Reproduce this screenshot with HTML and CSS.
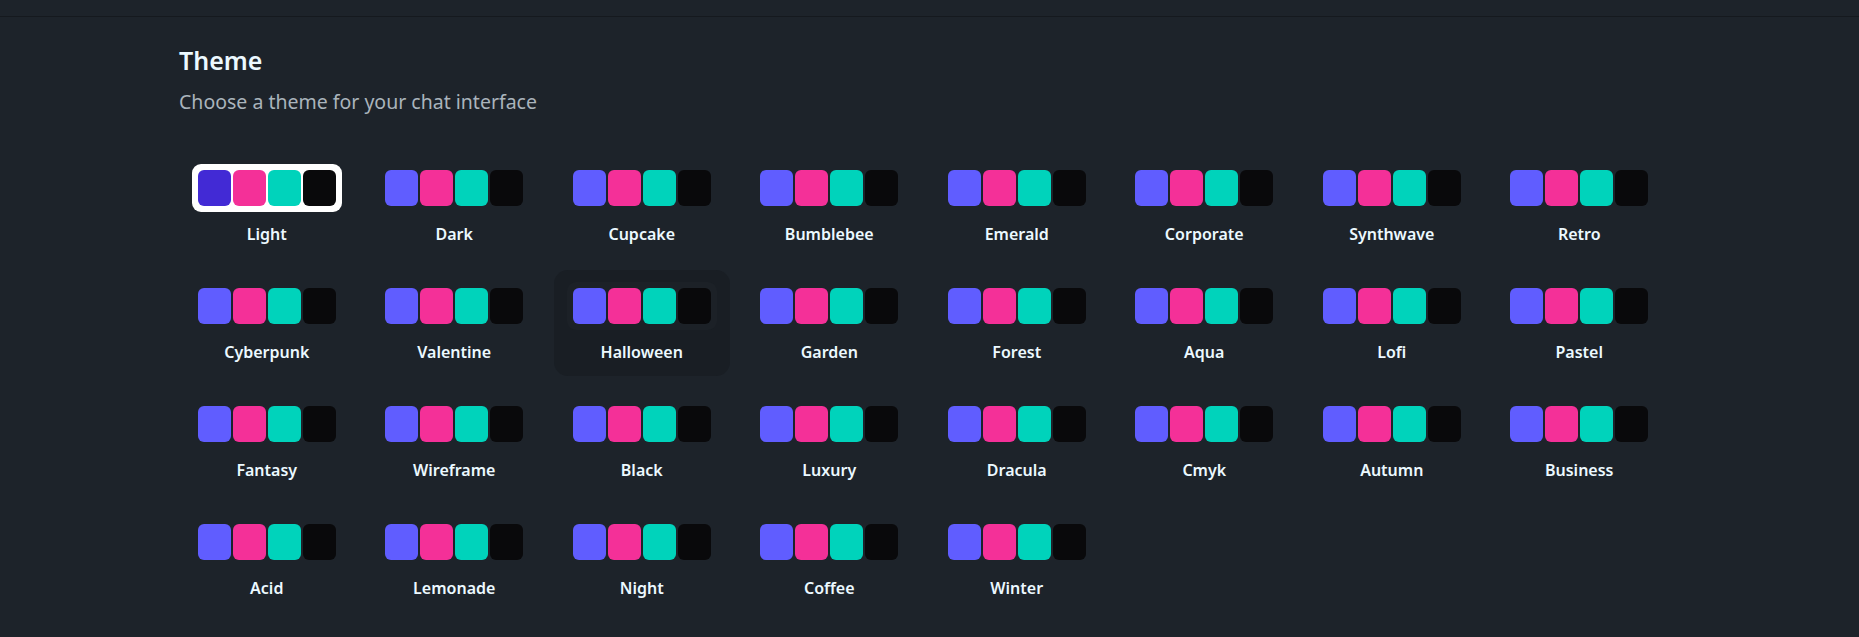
FILE: index.html
```html
<!DOCTYPE html>
<html lang="en">
<head>
<meta charset="utf-8">
<title>Theme</title>
<link rel="stylesheet" href="styles.css">
</head>
<body>
<header class="topbar"></header>
<main class="settings">
  <h2 class="title">Theme</h2>
  <p class="subtitle">Choose a theme for your chat interface</p>
  <div class="theme-grid">
    <button class="theme-card selected"><span class="swatches"><span class="sw primary"></span><span class="sw secondary"></span><span class="sw accent"></span><span class="sw neutral"></span></span><span class="name">Light</span></button>
    <button class="theme-card"><span class="swatches"><span class="sw primary"></span><span class="sw secondary"></span><span class="sw accent"></span><span class="sw neutral"></span></span><span class="name">Dark</span></button>
    <button class="theme-card"><span class="swatches"><span class="sw primary"></span><span class="sw secondary"></span><span class="sw accent"></span><span class="sw neutral"></span></span><span class="name">Cupcake</span></button>
    <button class="theme-card"><span class="swatches"><span class="sw primary"></span><span class="sw secondary"></span><span class="sw accent"></span><span class="sw neutral"></span></span><span class="name">Bumblebee</span></button>
    <button class="theme-card"><span class="swatches"><span class="sw primary"></span><span class="sw secondary"></span><span class="sw accent"></span><span class="sw neutral"></span></span><span class="name">Emerald</span></button>
    <button class="theme-card"><span class="swatches"><span class="sw primary"></span><span class="sw secondary"></span><span class="sw accent"></span><span class="sw neutral"></span></span><span class="name">Corporate</span></button>
    <button class="theme-card"><span class="swatches"><span class="sw primary"></span><span class="sw secondary"></span><span class="sw accent"></span><span class="sw neutral"></span></span><span class="name">Synthwave</span></button>
    <button class="theme-card"><span class="swatches"><span class="sw primary"></span><span class="sw secondary"></span><span class="sw accent"></span><span class="sw neutral"></span></span><span class="name">Retro</span></button>
    <button class="theme-card"><span class="swatches"><span class="sw primary"></span><span class="sw secondary"></span><span class="sw accent"></span><span class="sw neutral"></span></span><span class="name">Cyberpunk</span></button>
    <button class="theme-card"><span class="swatches"><span class="sw primary"></span><span class="sw secondary"></span><span class="sw accent"></span><span class="sw neutral"></span></span><span class="name">Valentine</span></button>
    <button class="theme-card hover"><span class="swatches"><span class="sw primary"></span><span class="sw secondary"></span><span class="sw accent"></span><span class="sw neutral"></span></span><span class="name">Halloween</span></button>
    <button class="theme-card"><span class="swatches"><span class="sw primary"></span><span class="sw secondary"></span><span class="sw accent"></span><span class="sw neutral"></span></span><span class="name">Garden</span></button>
    <button class="theme-card"><span class="swatches"><span class="sw primary"></span><span class="sw secondary"></span><span class="sw accent"></span><span class="sw neutral"></span></span><span class="name">Forest</span></button>
    <button class="theme-card"><span class="swatches"><span class="sw primary"></span><span class="sw secondary"></span><span class="sw accent"></span><span class="sw neutral"></span></span><span class="name">Aqua</span></button>
    <button class="theme-card"><span class="swatches"><span class="sw primary"></span><span class="sw secondary"></span><span class="sw accent"></span><span class="sw neutral"></span></span><span class="name">Lofi</span></button>
    <button class="theme-card"><span class="swatches"><span class="sw primary"></span><span class="sw secondary"></span><span class="sw accent"></span><span class="sw neutral"></span></span><span class="name">Pastel</span></button>
    <button class="theme-card"><span class="swatches"><span class="sw primary"></span><span class="sw secondary"></span><span class="sw accent"></span><span class="sw neutral"></span></span><span class="name">Fantasy</span></button>
    <button class="theme-card"><span class="swatches"><span class="sw primary"></span><span class="sw secondary"></span><span class="sw accent"></span><span class="sw neutral"></span></span><span class="name">Wireframe</span></button>
    <button class="theme-card"><span class="swatches"><span class="sw primary"></span><span class="sw secondary"></span><span class="sw accent"></span><span class="sw neutral"></span></span><span class="name">Black</span></button>
    <button class="theme-card"><span class="swatches"><span class="sw primary"></span><span class="sw secondary"></span><span class="sw accent"></span><span class="sw neutral"></span></span><span class="name">Luxury</span></button>
    <button class="theme-card"><span class="swatches"><span class="sw primary"></span><span class="sw secondary"></span><span class="sw accent"></span><span class="sw neutral"></span></span><span class="name">Dracula</span></button>
    <button class="theme-card"><span class="swatches"><span class="sw primary"></span><span class="sw secondary"></span><span class="sw accent"></span><span class="sw neutral"></span></span><span class="name">Cmyk</span></button>
    <button class="theme-card"><span class="swatches"><span class="sw primary"></span><span class="sw secondary"></span><span class="sw accent"></span><span class="sw neutral"></span></span><span class="name">Autumn</span></button>
    <button class="theme-card"><span class="swatches"><span class="sw primary"></span><span class="sw secondary"></span><span class="sw accent"></span><span class="sw neutral"></span></span><span class="name">Business</span></button>
    <button class="theme-card"><span class="swatches"><span class="sw primary"></span><span class="sw secondary"></span><span class="sw accent"></span><span class="sw neutral"></span></span><span class="name">Acid</span></button>
    <button class="theme-card"><span class="swatches"><span class="sw primary"></span><span class="sw secondary"></span><span class="sw accent"></span><span class="sw neutral"></span></span><span class="name">Lemonade</span></button>
    <button class="theme-card"><span class="swatches"><span class="sw primary"></span><span class="sw secondary"></span><span class="sw accent"></span><span class="sw neutral"></span></span><span class="name">Night</span></button>
    <button class="theme-card"><span class="swatches"><span class="sw primary"></span><span class="sw secondary"></span><span class="sw accent"></span><span class="sw neutral"></span></span><span class="name">Coffee</span></button>
    <button class="theme-card"><span class="swatches"><span class="sw primary"></span><span class="sw secondary"></span><span class="sw accent"></span><span class="sw neutral"></span></span><span class="name">Winter</span></button>
  </div>
</main>
</body>
</html>
```

FILE: styles.css
```css
* { box-sizing: border-box; }
html, body {
  margin: 0;
  padding: 0;
  background: #1d232a;
  color: #ecf9ff;
  font-family: "Noto Sans", "Open Sans", "Liberation Sans", sans-serif;
}
body { height: 637px; overflow: hidden; }

.topbar {
  height: 17px;
  border-bottom: 1px solid #15191e;
}

.settings {
  padding: 27px 0 0 179px;
}

.title {
  margin: 0;
  font-size: 25px;
  line-height: 32px;
  font-weight: 600;
  color: #ecf9ff;
}

.subtitle {
  margin: 12px 0 0;
  font-size: 19.5px;
  line-height: 28px;
  font-weight: 400;
  color: #aab4bc;
}

.theme-grid {
  margin-top: 36px;
  width: 1488px;
  display: grid;
  grid-template-columns: repeat(8, 1fr);
  gap: 12px;
}

.theme-card {
  display: flex;
  flex-direction: column;
  align-items: center;
  padding: 12px;
  height: 106px;
  border: 0;
  border-radius: 14px;
  background: transparent;
  font-family: inherit;
  cursor: pointer;
}
.theme-card.hover { background: #191e24; }

.swatches {
  display: flex;
  gap: 2px;
  padding: 6px;
  border-radius: 9px;
  background: transparent;
}
.theme-card.hover .swatches { background: #1c2127; }
.theme-card.selected .swatches { background: #ffffff; }

.sw {
  width: 33px;
  height: 36px;
  border-radius: 6px;
}
.sw.primary { background: #605dff; }
.sw.secondary { background: #f43098; }
.sw.accent { background: #00d3bb; }
.sw.neutral { background: #09090b; }
.theme-card.selected .sw.primary { background: #422ad5; }

.name {
  margin-top: 10px;
  font-size: 16px;
  line-height: 24px;
  font-weight: 600;
  color: #ecf9ff;
}
```
